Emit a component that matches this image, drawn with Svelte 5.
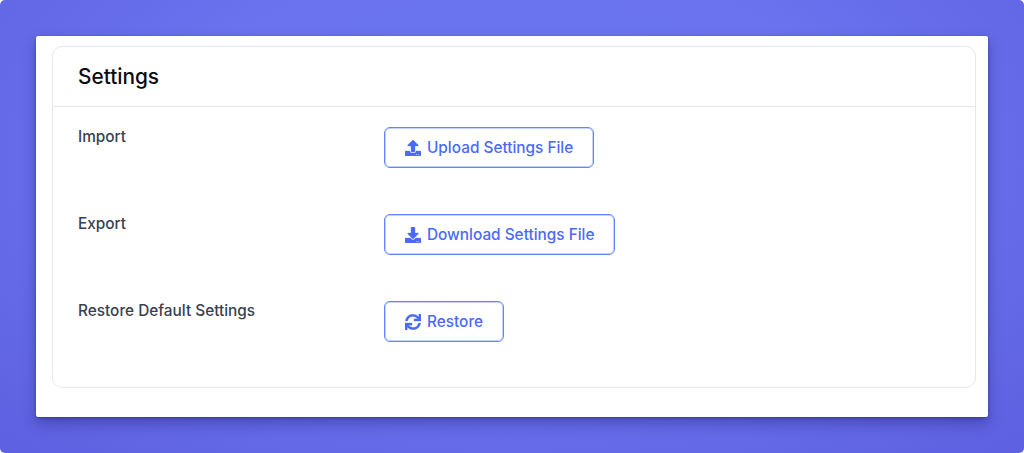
<script>
  const rows = [
    {
      label: 'Import',
      action: 'Upload Settings File',
      icon: 'M296 384h-80c-13.3 0-24-10.7-24-24V192h-87.7c-17.8 0-26.7-21.5-14.1-34.1L242.3 5.7c7.5-7.5 19.8-7.5 27.3 0l152.2 152.2c12.6 12.6 3.7 34.1-14.1 34.1H320v168c0 13.3-10.7 24-24 24zm216-8v112c0 13.3-10.7 24-24 24H24c-13.3 0-24-10.7-24-24V376c0-13.3 10.7-24 24-24h136v8c0 30.9 25.1 56 56 56h80c30.9 0 56-25.1 56-56v-8h136c13.3 0 24 10.7 24 24zm-124 88c0-11-9-20-20-20s-20 9-20 20 9 20 20 20 20-9 20-20zm64 0c0-11-9-20-20-20s-20 9-20 20 9 20 20 20 20-9 20-20z'
    },
    {
      label: 'Export',
      action: 'Download Settings File',
      icon: 'M216 0h80c13.3 0 24 10.7 24 24v168h87.7c17.8 0 26.7 21.5 14.1 34.1L269.7 378.3c-7.5 7.5-19.8 7.5-27.3 0L90.1 226.1c-12.6-12.6-3.7-34.1 14.1-34.1H192V24c0-13.3 10.7-24 24-24zm296 376v112c0 13.3-10.7 24-24 24H24c-13.3 0-24-10.7-24-24V376c0-13.3 10.7-24 24-24h146.7l49 49c20.1 20.1 52.5 20.1 72.6 0l49-49H488c13.3 0 24 10.7 24 24zm-124 88c0-11-9-20-20-20s-20 9-20 20 9 20 20 20 20-9 20-20zm64 0c0-11-9-20-20-20s-20 9-20 20 9 20 20 20 20-9 20-20z'
    },
    {
      label: 'Restore Default Settings',
      action: 'Restore',
      icon: 'M440.65 12.57l4 82.77A247.16 247.16 0 0 0 255.83 8C134.73 8 33.91 94.92 12.29 209.82A12 12 0 0 0 24.09 224h49.05a12 12 0 0 0 11.67-9.26 175.91 175.91 0 0 1 317-56.94l-101.46-4.86a12 12 0 0 0-12.57 12v47.41a12 12 0 0 0 12 12H500a12 12 0 0 0 12-12V12a12 12 0 0 0-12-12h-47.37a12 12 0 0 0-11.98 12.57zM255.83 432a175.61 175.61 0 0 1-146-77.8l101.8 4.87a12 12 0 0 0 12.57-12v-47.4a12 12 0 0 0-12-12H12a12 12 0 0 0-12 12V500a12 12 0 0 0 12 12h47.35a12 12 0 0 0 12-12.6l-4.15-82.57A247.17 247.17 0 0 0 255.83 504c121.11 0 221.93-86.92 243.55-201.82a12 12 0 0 0-11.8-14.18h-49.05a12 12 0 0 0-11.67 9.26A175.86 175.86 0 0 1 255.83 432z'
    }
  ];
</script>

<div class="page">
  <div class="panel">
    <div class="card">
      <div class="header">
        <h1>Settings</h1>
      </div>
      <div class="body">
        {#each rows as row}
          <div class="row">
            <div class="label">{row.label}</div>
            <button class="btn">
              <svg viewBox="0 0 512 512" width="16" height="16" aria-hidden="true"><path d={row.icon} /></svg>
              {row.action}
            </button>
          </div>
        {/each}
      </div>
    </div>
  </div>
</div>

<style>
  :global(body) {
    margin: 0;
    background: #ffffff;
    font-family: Inter, "Liberation Sans", sans-serif;
  }
  .page {
    box-sizing: border-box;
    width: 1024px;
    height: 453px;
    padding: 36px 36px;
    overflow: hidden;
    border-radius: 5px;
    background: radial-gradient(ellipse at 50% 35%, #6e78f3 0%, #6a72ee 50%, #5d60e0 100%);
  }
  .panel {
    box-sizing: border-box;
    height: 381px;
    padding: 10px 12px 29px 16px;
    background: #ffffff;
    border-radius: 2px;
    box-shadow: 0 1px 3px rgba(35, 35, 100, 0.45), 0 7px 14px rgba(35, 35, 110, 0.4);
  }
  .card {
    box-sizing: border-box;
    height: 342px;
    border: 1px solid #e6e7f1;
    border-radius: 10px;
  }
  .header {
    box-sizing: border-box;
    height: 60px;
    padding: 0 25px;
    display: flex;
    align-items: center;
    border-bottom: 1px solid #e6e7f1;
  }
  h1 {
    margin: 0;
    font-size: 20.8px;
    font-weight: 500;
    color: #0b0b0f;
  }
  .body {
    padding: 20px 25px 0;
    display: flex;
    flex-direction: column;
    gap: 46px;
  }
  .row {
    display: flex;
    align-items: flex-start;
  }
  .label {
    width: 306px;
    font-size: 15.36px;
    font-weight: 500;
    line-height: 20px;
    color: #374151;
  }
  .btn {
    box-sizing: border-box;
    height: 41px;
    padding: 0 20px;
    display: flex;
    align-items: center;
    gap: 6px;
    background: #ffffff;
    border: 1px solid #6384fa;
    border-radius: 6px;
    box-shadow: inset 0 0 0 1px #c6d1fd;
    color: #4a6af6;
    font-family: inherit;
    font-size: 15.36px;
    font-weight: 500;
    cursor: pointer;
  }
  .btn svg {
    fill: currentColor;
    stroke: currentColor;
    stroke-width: 10;
    flex: none;
  }
</style>
